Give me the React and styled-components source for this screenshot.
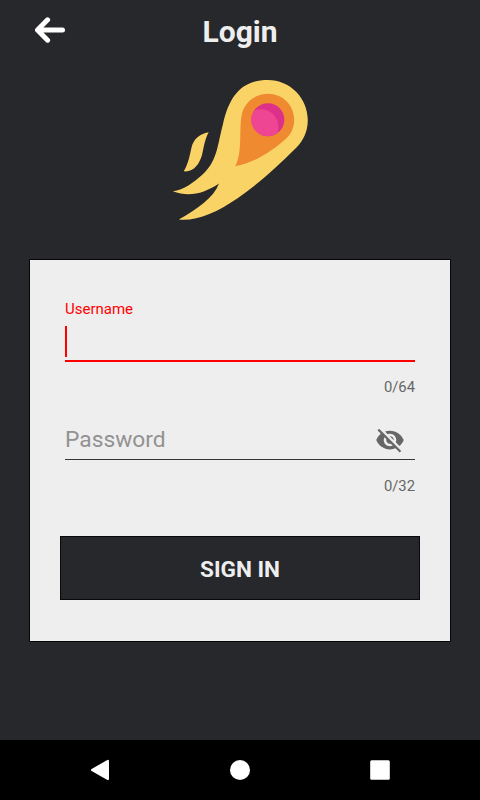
import React from "react";
import styled, { createGlobalStyle } from "styled-components";

const GlobalStyle = createGlobalStyle`
  * { box-sizing: border-box; }
  body { margin: 0; background: #27282c; font-family: Roboto, sans-serif; }
`;

const Screen = styled.div`
  width: 480px;
  height: 800px;
  display: flex;
  flex-direction: column;
  background: #27282c;
  overflow: hidden;
`;

const Header = styled.header`
  height: 62px;
  display: grid;
  grid-template-columns: 100px 1fr 100px;
  align-items: center;
`;

const BackButton = styled.button`
  border: 0;
  padding: 0 0 2px 34px;
  background: none;
  display: flex;
`;

const Title = styled.h1`
  margin: 0;
  padding-top: 2px;
  text-align: center;
  font-size: 30px;
  line-height: 36px;
  font-weight: 700;
  color: #eeeeee;
`;

const LogoArea = styled.div`
  height: 197px;
  padding-top: 17px;
  display: flex;
  justify-content: center;
  align-items: flex-start;
`;

const Card = styled.form`
  width: 422px;
  height: 383px;
  margin: 0 auto;
  padding: 39px 30px 0;
  border: 1px solid #050507;
  background: #eeeeee;
`;

const Field = styled.div`
  margin: 0 5px;
  display: flex;
  flex-direction: column;
`;

const Label = styled.label`
  font-size: 15px;
  line-height: 20px;
  color: #ff0000;
`;

const InputRow = styled.div`
  height: ${(p) => p.$height}px;
  padding-top: ${(p) => p.$top}px;
  display: flex;
  align-items: center;
  justify-content: space-between;
  border-bottom: ${(p) => (p.$active ? "2px solid #ff0000" : "1px solid #35363a")};
`;

const Caret = styled.span`
  width: 2.3px;
  height: 31px;
  background: #ff0000;
`;

const Placeholder = styled.span`
  font-size: 22.8px;
  line-height: 28px;
  color: #929292;
`;

const EyeButton = styled.button`
  border: 0;
  padding: 0;
  margin-right: 10px;
  background: none;
  display: flex;
`;

const Counter = styled.span`
  margin-top: ${(p) => p.$gap}px;
  text-align: right;
  font-size: 14.8px;
  line-height: 20px;
  color: #666666;
`;

const SignIn = styled.button`
  width: 360px;
  height: 64px;
  margin-top: 40px;
  padding: 3px 0 0;
  border: 1px solid #08090b;
  background: #27282c;
  color: #eeeeee;
  font: 700 22.6px/28px Roboto, sans-serif;
`;

const NavBar = styled.nav`
  height: 60px;
  margin-top: auto;
  padding: 0 30px;
  background: #000;
  display: grid;
  grid-template-columns: repeat(3, 140px);
  align-items: center;
  justify-items: center;
`;

const Comet = () => (
  <svg width="136" height="142" viewBox="172 79 136 142">
    <path
      fill="#fad366"
      d="M267.8 80 C290 80 307.8 98 307.8 120 C307.8 131 303.5 140.500 296.500 147.500 C275 169 256 185.500 238 198 C216 213 196 221.500 178.800 219.600 C198 208.500 213.500 198 219 183.500 C204 193.500 189 197.500 172.800 191.300 C184 190 193.500 182.500 202 175 C211 167 214.500 158 217 149.500 C219.500 140 220.500 133 223 124 C229 97 241 80 267.800 80Z"
    />
    <path
      fill="#fad366"
      d="M208.700 132.300 C199 134 193.500 139.500 191.500 147.500 C189.500 156 188.500 163.500 183.700 171.300 C193.500 172.500 199.500 164 202 155 C204 147 204.500 140 208.700 132.300Z"
    />
    <path
      fill="#f08a30"
      d="M268 93.700 C282.500 93.700 294.200 105 294.200 119.700 C294.200 128 291 134.500 284.500 140 C272 151 254 163 235.200 166.200 C239.500 159 240 147 240.300 137 C240.500 127 240.500 121 241.800 114.500 C244.500 102 255.500 93.700 268 93.700Z"
    />
    <circle cx="267.9" cy="119.7" r="16.5" fill="#dd3088" />
    <path
      fill="#ef4694"
      d="M254.200 110.500 C266.500 105.500 281.500 115 277.700 133 A16.500 16.500 0 0 1 254.200 110.500Z"
    />
  </svg>
);

export default function App() {
  return (
    <>
      <GlobalStyle />
      <Screen>
        <Header>
          <BackButton aria-label="Back">
            <svg width="32" height="28" viewBox="34 16 32 28">
              <path
                d="M47.600 19.800 L37.500 30 L47.600 40.200 M38 30 H62.500"
                fill="none"
                stroke="#fff"
                strokeWidth="5"
                strokeLinecap="round"
                strokeLinejoin="round"
              />
            </svg>
          </BackButton>
          <Title>Login</Title>
        </Header>
        <LogoArea>
          <Comet />
        </LogoArea>
        <Card>
          <Field>
            <Label>Username</Label>
            <InputRow $active $height={43} $top={4}>
              <Caret />
            </InputRow>
            <Counter $gap={15}>0/64</Counter>
          </Field>
          <Field>
            <InputRow $height={63} $top={24}>
              <Placeholder>Password</Placeholder>
              <EyeButton type="button" aria-label="Show password">
                <svg width="30" height="30" viewBox="0 0 24 24" fill="#666666">
                  <path d="M12 7c2.760 0 5 2.240 5 5 0 .65-.13 1.260-.36 1.830l2.920 2.920c1.510-1.260 2.700-2.890 3.430-4.750-1.730-4.390-6-7.500-11-7.500-1.400 0-2.740.25-3.980.7l2.160 2.160C10.740 7.130 11.350 7 12 7zM2 4.270l2.280 2.280.46.46C3.080 8.300 1.780 10.020 1 12c1.730 4.390 6 7.500 11 7.500 1.550 0 3.030-.3 4.380-.84l.42.42L19.730 22 21 20.730 3.270 3 2 4.270zM7.530 9.800l1.550 1.550c-.05.21-.08.43-.08.65 0 1.660 1.340 3 3 3 .22 0 .44-.03.65-.08l1.550 1.550c-.67.33-1.410.53-2.200.53-2.760 0-5-2.240-5-5 0-.79.2-1.530.53-2.200zm4.310-.78l3.150 3.150.02-.16c0-1.660-1.340-3-3-3l-.17.01z" />
                </svg>
              </EyeButton>
            </InputRow>
            <Counter $gap={16}>0/32</Counter>
          </Field>
          <SignIn type="button">SIGN IN</SignIn>
        </Card>
        <NavBar>
          <svg width="20" height="22" viewBox="90 759 20 22">
            <path
              d="M91.600 768.900 L107 760.200 Q109 759.200 109 761.200 V778.800 Q109 780.800 107 779.800 L91.600 771.100 Q90.200 770 91.600 768.900Z"
              fill="#fff"
            />
          </svg>
          <svg width="20" height="20" viewBox="0 0 20 20">
            <circle cx="10" cy="10" r="10" fill="#fff" />
          </svg>
          <svg width="20" height="20" viewBox="0 0 20 20">
            <rect x="0.2" y="0.2" width="19.6" height="19.6" rx="1.5" fill="#fff" />
          </svg>
        </NavBar>
      </Screen>
    </>
  );
}
